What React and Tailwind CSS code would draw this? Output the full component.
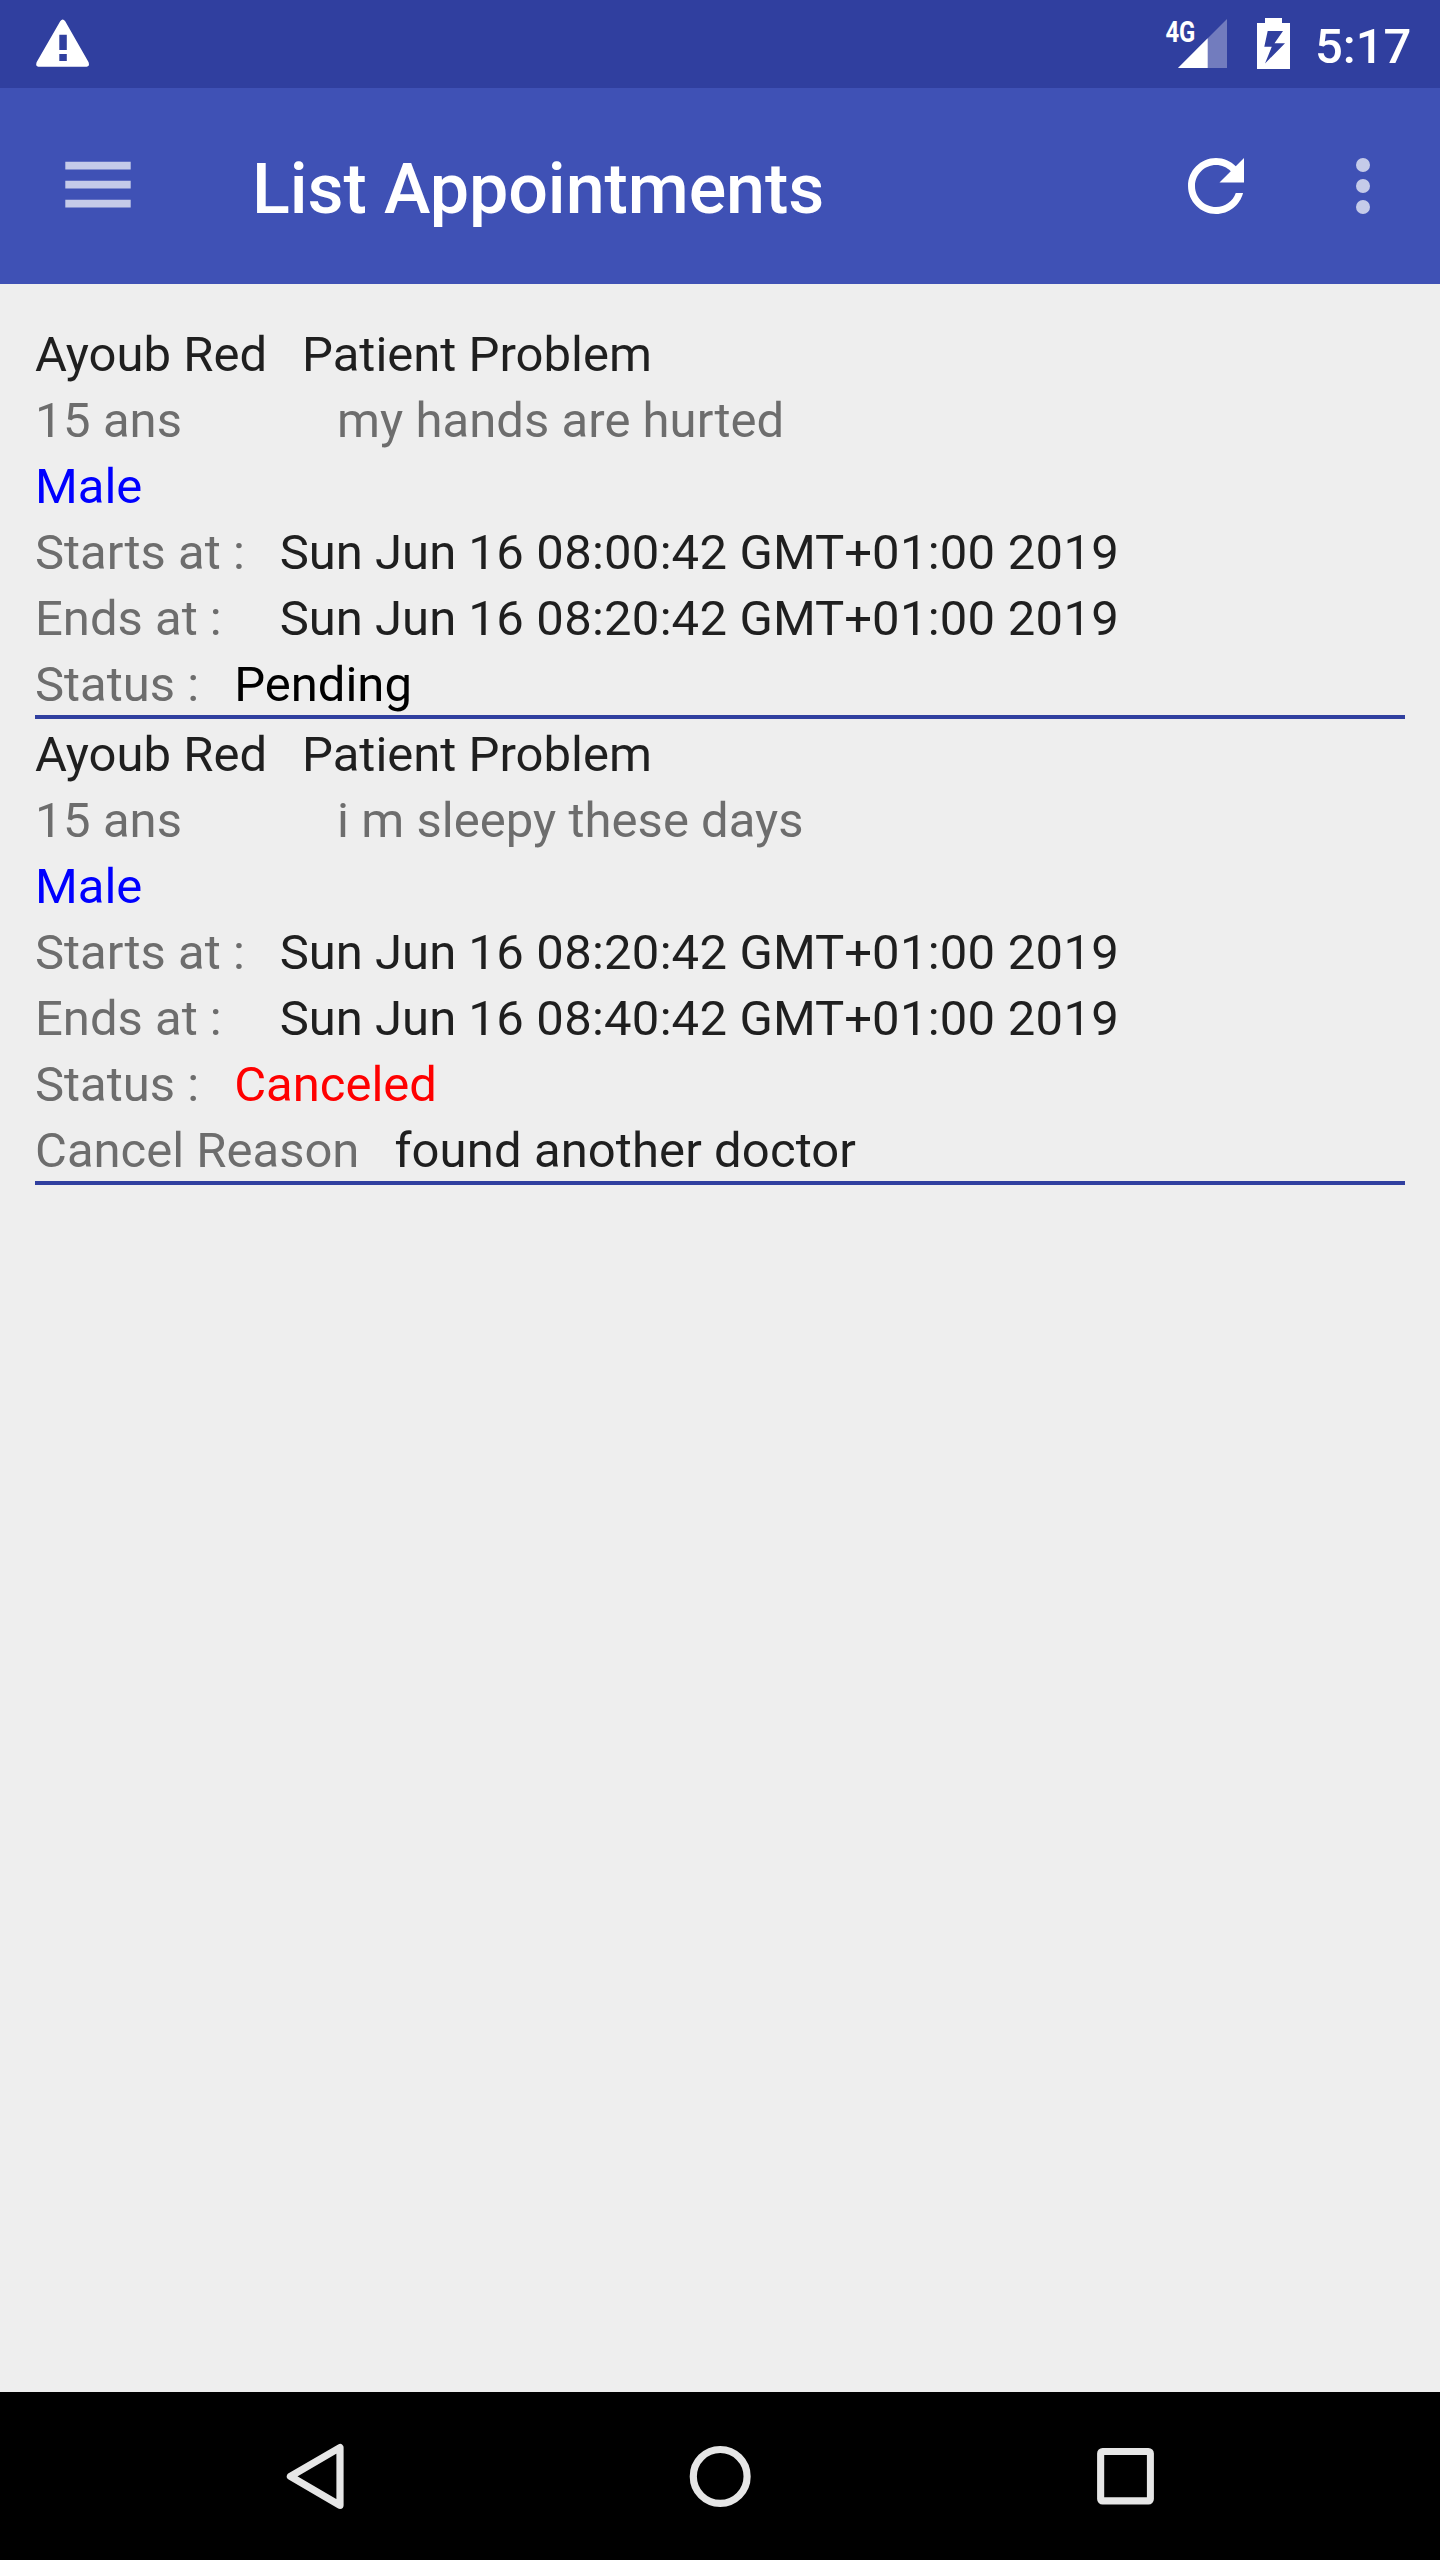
const appointments = [
  {
    name: 'Ayoub Red',
    age: '15 ans',
    gender: 'Male',
    problem: 'my hands are hurted',
    start: 'Sun Jun 16 08:00:42 GMT+01:00 2019',
    end: 'Sun Jun 16 08:20:42 GMT+01:00 2019',
    status: 'Pending',
  },
  {
    name: 'Ayoub Red',
    age: '15 ans',
    gender: 'Male',
    problem: 'i m sleepy these days',
    start: 'Sun Jun 16 08:20:42 GMT+01:00 2019',
    end: 'Sun Jun 16 08:40:42 GMT+01:00 2019',
    status: 'Canceled',
    reason: 'found another doctor',
  },
];

function StatusBar() {
  return (
    <div className="flex h-[88px] items-center justify-between bg-[#303f9f] pl-[35px] pr-[28px] text-white">
      <svg className="h-[88px] w-[56px]" viewBox="35 0 56 88" fill="currentColor">
        <path
          fillRule="evenodd"
          d="M60.2 21.2Q62.7 18 65.2 21.2L88.6 62.3Q90 66.6 86.6 66.7H38.4Q35.2 66.6 36.6 62.3ZM59.3 34.7V50H66.8V34.7ZM59.3 54V61H66.8V54Z"
        />
      </svg>
      <div className="flex items-center">
        <svg className="h-[88px] w-[66px]" viewBox="1164 0 66 88" fill="currentColor">
          <text
            x="1165.4"
            y="41.5"
            className="font-['Roboto'] text-[29.5px] font-bold"
            textLength="30"
            lengthAdjust="spacingAndGlyphs"
          >
            4G
          </text>
          <path d="M1178 68L1227 19V68Z" opacity="0.32" />
          <path d="M1178 68L1207.7 38.3V68Z" />
        </svg>
        <svg className="ml-[26px] h-[88px] w-[36px]" viewBox="1256 0 36 88" fill="currentColor">
          <path
            fillRule="evenodd"
            d="M1257 23H1265V18H1282V23H1290V69H1257ZM1267.7 31L1264.3 46.7H1271.8L1265 63.4L1285 43.3H1274.5L1283 31Z"
          />
        </svg>
        <span className="ml-[23px] w-[97px] pt-[5px] text-[49px] leading-none font-medium whitespace-nowrap">5:17</span>
      </div>
    </div>
  );
}

function Toolbar() {
  return (
    <header className="flex h-[196px] items-center bg-[#3f51b5] pr-[35px] text-white">
      <svg className="ml-[56px] h-[84px] w-[84px]" viewBox="56 144 84 84" fill="#c5cbe9">
        <path d="M65.3 161.7h65.4v7.8H65.3zM65.3 180.7h65.4v7.8H65.3zM65.3 199.7h65.4v7.8H65.3z" />
      </svg>
      <h1 className="ml-[112px] flex-1 pt-[6px] text-[70px] leading-[82px] font-medium tracking-[-0.08px] whitespace-nowrap">
        List Appointments
      </h1>
      <svg className="h-[84px] w-[84px]" viewBox="0 0 24 24" fill="currentColor">
        <path d="M17.65 6.35C16.2 4.9 14.21 4 12 4c-4.42 0-7.99 3.58-7.99 8s3.57 8 7.99 8c3.73 0 6.84-2.55 7.73-6h-2.08c-.82 2.33-3.04 4-5.65 4-3.31 0-6-2.69-6-6s2.69-6 6-6c1.66 0 3.14.69 4.22 1.78L13 11h7V4l-2.35 2.35z" />
      </svg>
      <svg className="ml-[63px] h-[84px] w-[84px]" viewBox="1321 144 84 84" fill="#c5cbe9">
        <circle cx="1363" cy="165" r="7" />
        <circle cx="1363" cy="186" r="7" />
        <circle cx="1363" cy="207" r="7" />
      </svg>
    </header>
  );
}

function Line({ children, className = '' }) {
  return (
    <span className={`block h-[66px] leading-[71px] whitespace-nowrap ${className}`}>{children}</span>
  );
}

// Digits are set slightly wider than the letters around them.
function Digits({ text }) {
  return text.split(/(\d+)/).map((part, i) =>
    i % 2 ? (
      <span key={i} className="tracking-[0.35px]">
        {part}
      </span>
    ) : (
      part
    ),
  );
}

function Appointment({ item }) {
  return (
    <li className="border-b-4 border-[#303f9f] text-[49px] text-[#1f1f1f]">
      <div className="flex gap-[35px]">
        <div>
          <Line>{item.name}</Line>
          <Line className="text-[#6d6d6d]">
            <Digits text={item.age} />
          </Line>
          <Line className="text-[#0000ff]">{item.gender}</Line>
        </div>
        <div>
          <Line>Patient Problem</Line>
          <Line className="pl-[35px] tracking-[0.04px] text-[#6d6d6d]">{item.problem}</Line>
        </div>
      </div>
      <div className="flex gap-[35px]">
        <div className="text-[#6d6d6d]">
          <Line>Starts at :</Line>
          <Line>Ends at :</Line>
        </div>
        <div>
          <Line>
            <Digits text={item.start} />
          </Line>
          <Line>
            <Digits text={item.end} />
          </Line>
        </div>
      </div>
      <div className="flex gap-[35px]">
        <Line className="text-[#6d6d6d]">Status :</Line>
        <Line className={item.status === 'Canceled' ? 'text-[#ff0000]' : 'text-black'}>{item.status}</Line>
      </div>
      {item.reason && (
        <div className="flex gap-[35px]">
          <Line className="text-[#6d6d6d]">Cancel Reason</Line>
          <Line className="tracking-[0.1px]">{item.reason}</Line>
        </div>
      )}
    </li>
  );
}

function NavigationBar() {
  return (
    <nav className="flex h-[168px] items-center justify-center gap-[321px] bg-black">
      <svg className="h-[84px] w-[84px]" viewBox="273 2434 84 84" fill="none" stroke="#e6e6e6" strokeWidth="7.2">
        <path d="M340 2447.5V2505.3L290.4 2476.4Z" strokeLinejoin="round" />
      </svg>
      <svg className="h-[84px] w-[84px]" viewBox="678 2434 84 84" fill="none" stroke="#e6e6e6" strokeWidth="7.2">
        <circle cx="720.2" cy="2476.4" r="26.9" />
      </svg>
      <svg className="h-[84px] w-[84px]" viewBox="1083 2434 84 84" fill="#e6e6e6">
        <path
          fillRule="evenodd"
          d="M1102.6 2448h45.8a5.5 5.5 0 0 1 5.5 5.5v45.5a5.5 5.5 0 0 1-5.5 5.5h-45.8a5.5 5.5 0 0 1-5.5-5.5v-45.5a5.5 5.5 0 0 1 5.5-5.5zM1104.2 2455v42.2h42.7V2455z"
        />
      </svg>
    </nav>
  );
}

export default function App() {
  return (
    <div className="flex h-[2560px] w-[1440px] flex-col overflow-hidden bg-[#eeeeee] font-['Roboto',sans-serif]">
      <StatusBar />
      <Toolbar />
      <main className="flex-1 p-[35px]">
        <ul>
          {appointments.map((item) => (
            <Appointment key={item.start} item={item} />
          ))}
        </ul>
      </main>
      <NavigationBar />
    </div>
  );
}
